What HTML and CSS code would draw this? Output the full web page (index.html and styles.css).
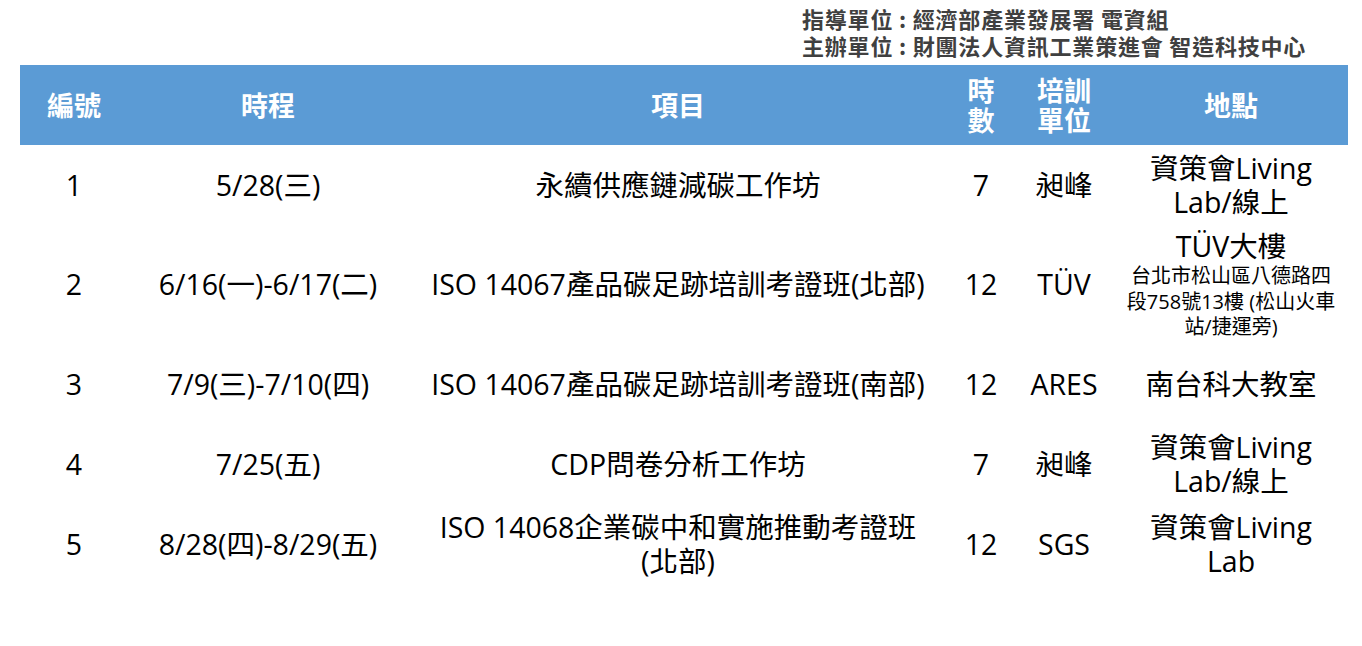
FILE: index.html
```html
<!DOCTYPE html>
<html lang="zh-Hant">
<head>
<meta charset="utf-8">
<title>課程時程表</title>
<link rel="stylesheet" href="styles.css">
</head>
<body>
<div class="page">
  <div class="credits">
    <div class="credit-line">指導單位 : 經濟部產業發展署 電資組</div>
    <div class="credit-line">主辦單位 : 財團法人資訊工業策進會 智造科技中心</div>
  </div>
  <div class="schedule">
    <div class="head-cell">編號</div>
    <div class="head-cell">時程</div>
    <div class="head-cell">項目</div>
    <div class="head-cell">時<br>數</div>
    <div class="head-cell">培訓<br>單位</div>
    <div class="head-cell">地點</div>

    <div class="cell">1</div>
    <div class="cell">5/28(三)</div>
    <div class="cell">永續供應鏈減碳工作坊</div>
    <div class="cell">7</div>
    <div class="cell">昶峰</div>
    <div class="cell"><div>資策會Living</div><div>Lab/線上</div></div>

    <div class="cell">2</div>
    <div class="cell">6/16(一)-6/17(二)</div>
    <div class="cell">ISO 14067產品碳足跡培訓考證班(北部)</div>
    <div class="cell">12</div>
    <div class="cell">TÜV</div>
    <div class="cell"><div>TÜV大樓</div><div class="addr">台北市松山區八德路四</div><div class="addr">段758號13樓 (松山火車</div><div class="addr">站/捷運旁)</div></div>

    <div class="cell">3</div>
    <div class="cell">7/9(三)-7/10(四)</div>
    <div class="cell">ISO 14067產品碳足跡培訓考證班(南部)</div>
    <div class="cell">12</div>
    <div class="cell">ARES</div>
    <div class="cell">南台科大教室</div>

    <div class="cell">4</div>
    <div class="cell">7/25(五)</div>
    <div class="cell">CDP問卷分析工作坊</div>
    <div class="cell">7</div>
    <div class="cell">昶峰</div>
    <div class="cell"><div>資策會Living</div><div>Lab/線上</div></div>

    <div class="cell">5</div>
    <div class="cell">8/28(四)-8/29(五)</div>
    <div class="cell"><div>ISO 14068企業碳中和實施推動考證班</div><div>(北部)</div></div>
    <div class="cell">12</div>
    <div class="cell">SGS</div>
    <div class="cell"><div>資策會Living</div><div>Lab</div></div>
  </div>
</div>
</body>
</html>
```
FILE: styles.css
```css
html, body {
  margin: 0;
  padding: 0;
  background: #ffffff;
}

.page {
  width: 1362px;
  padding-top: 5px;
}

.credits {
  margin-left: 802px;
  margin-bottom: 6px;
  font-family: "Noto Sans CJK TC", sans-serif;
  font-weight: 700;
  font-size: 22px;
  letter-spacing: 0.8px;
  line-height: 27px;
  color: #404040;
  white-space: nowrap;
}

.schedule {
  margin-left: 20px;
  width: 1328px;
  display: grid;
  grid-template-columns: 108px 280px 540px 66px 100px 234px;
  grid-template-rows: 80px;
  grid-auto-rows: minmax(80px, auto);
}

.head-cell {
  background: #5b9bd5;
  color: #ffffff;
  font-family: "Noto Sans CJK TC", sans-serif;
  font-weight: 700;
  font-size: 27px;
  line-height: 30px;
  display: flex;
  flex-direction: column;
  align-items: center;
  justify-content: center;
  text-align: center;
}

.cell {
  padding: 4px 0;
  font-family: "Open Sans", "Noto Sans CJK TC", sans-serif;
  font-size: 28.5px;
  line-height: 34px;
  color: #000000;
  display: flex;
  flex-direction: column;
  align-items: center;
  justify-content: center;
  text-align: center;
  white-space: nowrap;
}

.addr {
  font-size: 20px;
  line-height: 25.5px;
}
```
